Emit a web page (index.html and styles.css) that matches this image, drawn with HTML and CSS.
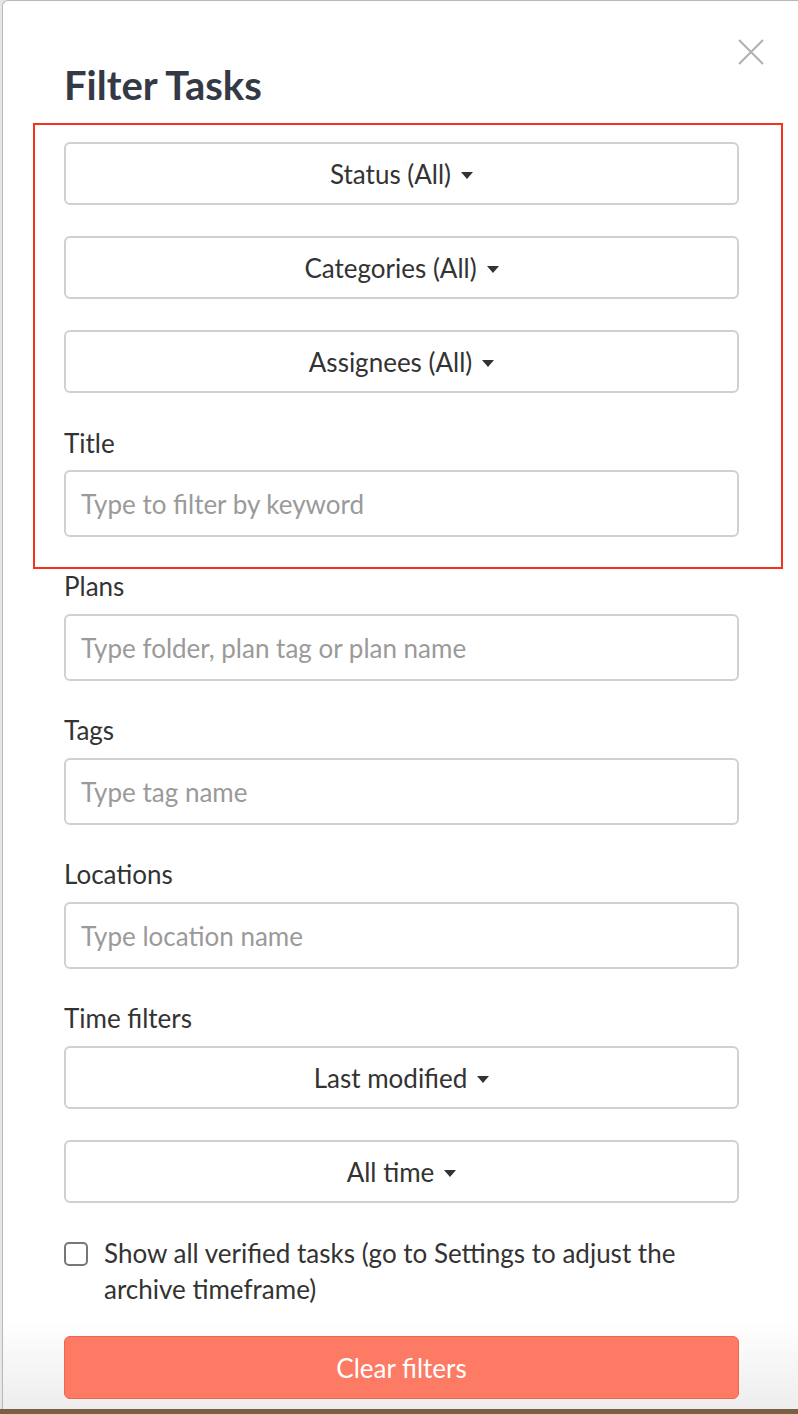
FILE: index.html
```html
<!DOCTYPE html>
<html lang="en">
<head>
<meta charset="utf-8">
<title>Filter Tasks</title>
<link rel="stylesheet" href="styles.css">
</head>
<body>
<div class="page">
  <div class="modal">
    <button class="close" aria-label="Close">
      <svg width="26" height="26" viewBox="0 0 26 26"><path d="M1 1 L25 25 M25 1 L1 25" stroke="#b0b0b0" stroke-width="2" fill="none"/></svg>
    </button>
    <div class="body">
      <h1 class="title">Filter Tasks</h1>
      <div class="highlight">
        <div class="dropdowns">
          <button class="dropdown">Status (All)<span class="caret"></span></button>
          <button class="dropdown">Categories (All)<span class="caret"></span></button>
          <button class="dropdown">Assignees (All)<span class="caret"></span></button>
        </div>
        <div class="field first">
          <label class="label">Title</label>
          <input class="input" type="text" placeholder="Type to filter by keyword">
        </div>
      </div>
      <div class="field tight">
        <label class="label">Plans</label>
        <input class="input" type="text" placeholder="Type folder, plan tag or plan name">
      </div>
      <div class="field">
        <label class="label">Tags</label>
        <input class="input" type="text" placeholder="Type tag name">
      </div>
      <div class="field">
        <label class="label">Locations</label>
        <input class="input" type="text" placeholder="Type location name">
      </div>
      <div class="field">
        <label class="label">Time filters</label>
        <div class="dropdowns">
          <button class="dropdown">Last modified<span class="caret"></span></button>
          <button class="dropdown">All time<span class="caret"></span></button>
        </div>
      </div>
      <label class="check">
        <span class="box"></span>
        <span class="check-text">Show all verified tasks (go to Settings to adjust the archive timeframe)</span>
      </label>
    </div>
    <div class="footer">
      <button class="clear">Clear filters</button>
    </div>
  </div>
</div>
</body>
</html>
```

FILE: styles.css
```css
html, body {
  margin: 0;
  padding: 0;
}
body {
  background: #7a6042;
  width: 798px;
  height: 1414px;
  overflow: hidden;
  font-family: Lato, "Open Sans", sans-serif;
  color: #333;
}
.page {
  height: 1409px;
  background: #e6e6e6;
  padding-left: 2px;
}
.modal {
  position: relative;
  width: 800px;
  height: 1409px;
  box-sizing: border-box;
  background: #fff;
  border-top: 1px solid #b8b8b8;
  border-left: 1px solid #b8b8b8;
  border-top-left-radius: 6px;
  display: flex;
  flex-direction: column;
}
.close {
  position: absolute;
  left: 735px;
  top: 38px;
  width: 26px;
  height: 26px;
  padding: 0;
  border: none;
  background: none;
}
.body {
  margin-left: 61px;
  width: 675px;
  flex: 1;
}
.title {
  margin: 61px 0 15px 0;
  font-size: 40px;
  line-height: 46px;
  font-weight: 700;
  color: #343a45;
}
.highlight {
  margin: 0 -44px 0 -31px;
  padding: 17px 42px 30px 29px;
  border: 2px solid #f4331c;
}
.dropdowns {
  display: flex;
  flex-direction: column;
  gap: 31px;
}
.dropdown {
  height: 63px;
  width: 100%;
  box-sizing: border-box;
  border: 2px solid #d0d0d0;
  border-radius: 6px;
  background: #fff;
  font-family: Lato, "Open Sans", sans-serif;
  font-size: 26px;
  color: #333;
  display: flex;
  align-items: center;
  justify-content: center;
  padding: 0;
}
.caret {
  display: inline-block;
  width: 0;
  height: 0;
  margin-left: 10px;
  margin-top: 3px;
  border-left: 6.5px solid transparent;
  border-right: 6.5px solid transparent;
  border-top: 7px solid #333;
}
.field {
  display: flex;
  flex-direction: column;
  margin-top: 35px;
}
.field.first {
  margin-top: 36px;
}
.field.tight {
  margin-top: 3px;
}
.label {
  font-size: 26px;
  line-height: 28px;
  margin-bottom: 14px;
  color: #333;
}
.field.first .label {
  margin-bottom: 13px;
}
.input {
  height: 67px;
  box-sizing: border-box;
  border: 2px solid #d0d0d0;
  border-radius: 6px;
  padding: 0 15px;
  font-family: Lato, "Open Sans", sans-serif;
  font-size: 26px;
  color: #333;
  outline: none;
}
.input::placeholder {
  color: #9a9a9a;
}
.check {
  display: flex;
  align-items: flex-start;
  gap: 16px;
  margin-top: 32px;
}
.box {
  flex: none;
  width: 24px;
  height: 24px;
  box-sizing: border-box;
  border: 2px solid #777;
  border-radius: 5px;
  margin-top: 7px;
}
.check-text {
  font-size: 26px;
  line-height: 36px;
  color: #333;
}
.footer {
  padding: 16px 0 10px 61px;
  background: linear-gradient(#ffffff, #ededed);
}
.clear {
  width: 675px;
  height: 63px;
  box-sizing: border-box;
  border: 1.5px solid #f06450;
  border-radius: 6px;
  background: #fd7a65;
  color: #fff;
  font-family: Lato, "Open Sans", sans-serif;
  font-size: 26px;
  padding: 0;
}
```
